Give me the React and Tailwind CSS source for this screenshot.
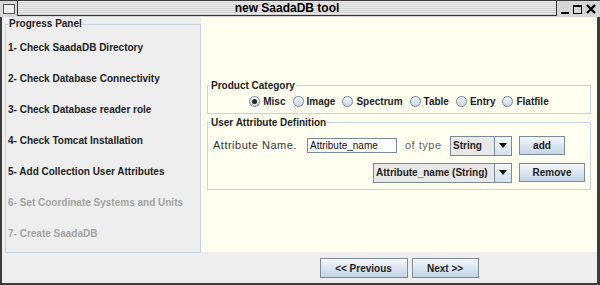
import React from "react"

const steps = [
  { label: "1- Check SaadaDB Directory", enabled: true },
  { label: "2- Check Database Connectivity", enabled: true },
  { label: "3- Check Database reader role", enabled: true },
  { label: "4- Check Tomcat Installation", enabled: true },
  { label: "5- Add Collection User Attributes", enabled: true },
  { label: "6- Set Coordinate Systems and Units", enabled: false },
  { label: "7- Create SaadaDB", enabled: false },
]

const categories = ["Misc", "Image", "Spectrum", "Table", "Entry", "Flatfile"]

const Radio = ({ label, checked }) => (
  <span className="flex items-center gap-[3px]">
    <span className="w-[11px] h-[11px] rounded-full border border-[#7a8a99] bg-linear-to-b from-[#f6f9fc] to-[#c4d5e6] flex items-center justify-center">
      {checked && <span className="w-[5px] h-[5px] rounded-full bg-[#222]" />}
    </span>
    <span className="font-bold text-[10px] text-[#222]">{label}</span>
  </span>
)

const MetalButton = ({ children, className = "" }) => (
  <button className={`h-[19px] border border-[#7a8a99] bg-linear-to-b from-[#f4f7fb] to-[#c4d5e6] text-[10px] font-bold text-[#222] flex items-center justify-center ${className}`}>
    {children}
  </button>
)

const Combo = ({ value, className = "" }) => (
  <div className={`h-[20px] flex ${className}`}>
    <div className="flex-1 border border-[#7a8a99] bg-[#e8e8e8] flex items-center pl-[2px] text-[10px] font-bold text-[#222] whitespace-nowrap overflow-hidden">
      {value}
    </div>
    <div className="w-[17px] border border-l-0 border-[#7a8a99] bg-linear-to-b from-[#f4f7fb] to-[#d4e0ec] flex items-center justify-center">
      <svg width="8" height="5" viewBox="0 0 8 5">
        <polygon points="0,0 8,0 4,5" fill="#111" />
      </svg>
    </div>
  </div>
)

const TitledBox = ({ title, children, className = "" }) => (
  <fieldset className={`border border-[#c3d3e3] ${className}`}>
    <legend className="ml-[2px] px-[1px] h-[12px] leading-[12px] font-bold text-[10px] text-[#222]">{title}</legend>
    {children}
  </fieldset>
)

export default function App() {
  return (
    <div className="w-[600px] h-[285px] bg-[#3c3c3c] pt-[1px] pl-[2px] pr-[3px] pb-[2px] flex flex-col font-['Liberation_Sans',Arial,sans-serif]">
      {/* title bar */}
      <div className="h-[16px] bg-[#d6d6d6] flex items-center -ml-[2px] -mr-[3px] pl-[3px] pr-[4px]">
        <div className="w-[12px] h-[10px] border border-[#555] bg-[#eee] shrink-0" />
        <div className="ml-[2px] flex-1 h-[15px] self-start border-l border-b border-r border-[#333] bg-[repeating-linear-gradient(#ececec_0px,#ececec_1px,#d2d2d2_1px,#d2d2d2_2px)] flex items-center justify-center">
          <span className="font-bold text-[12px] text-black leading-none">new SaadaDB tool</span>
        </div>
        <div className="flex items-center gap-[4px] ml-[4px]">
          <span className="w-[8px] h-[9px] border-b-2 border-black" />
          <span className="w-[9px] h-[9px] border border-black border-t-2" />
          <svg width="10" height="10" viewBox="0 0 10 10">
            <path d="M1 1 L9 9 M9 1 L1 9" stroke="#000" strokeWidth="2.4" />
          </svg>
        </div>
      </div>

      {/* body */}
      <div className="flex-1 flex">
        <div className="w-[199px] bg-[#eeeeee] pl-[3px] pt-[1px]">
          <TitledBox title="Progress Panel" className="h-[235px]">
            <div className="flex flex-col pt-[2px] pl-[2px]">
              {steps.map((s) => (
                <div key={s.label} className={`h-[31px] flex items-center font-bold text-[10px] whitespace-nowrap ${s.enabled ? "text-[#222]" : "text-[#a3a3a3]"}`}>
                  {s.label}
                </div>
              ))}
            </div>
          </TitledBox>
        </div>

        <div className="flex-1 flex flex-col">
          <div className="h-[235px] bg-[#fffff0] flex flex-col justify-center px-[6px]">
            <TitledBox title="Product Category" className="pb-[3px]">
              <div className="h-[16px] mt-[2px] flex items-center justify-center gap-[7px]">
                {categories.map((c) => (
                  <Radio key={c} label={c} checked={c === "Misc"} />
                ))}
              </div>
            </TitledBox>

            <TitledBox title="User Attribute Definition" className="mt-[3px] pb-[6px]">
              <div className="mt-[7px] h-[20px] flex items-center pl-[5px]">
                <span className="w-[94px] text-[11px] tracking-[0.5px] text-[#333] whitespace-nowrap">Attribute Name.</span>
                <div className="w-[90px] h-[15px] border border-[#7a8a99] bg-white flex items-center pl-[2px] text-[10px] text-[#111]">
                  Attribute_name
                </div>
                <span className="ml-[8px] w-[36px] text-[11px] tracking-[0.5px] text-[#666] whitespace-nowrap">of type</span>
                <Combo value="String" className="ml-[9px] w-[62px]" />
                <MetalButton className="ml-[7px] w-[46px]">add</MetalButton>
              </div>
              <div className="mt-[7px] h-[20px] flex items-center">
                <Combo value="Attribute_name (String)" className="ml-[165px] w-[139px]" />
                <MetalButton className="ml-[7px] w-[66px]">Remove</MetalButton>
              </div>
            </TitledBox>
          </div>

          <div className="flex-1 bg-[#eeeeee] flex items-start justify-center gap-[4px] pt-[6px]">
            <MetalButton className="w-[88px] h-[20px]">&lt;&lt; Previous</MetalButton>
            <MetalButton className="w-[67px] h-[20px]">Next &gt;&gt;</MetalButton>
          </div>
        </div>
      </div>
    </div>
  )
}
